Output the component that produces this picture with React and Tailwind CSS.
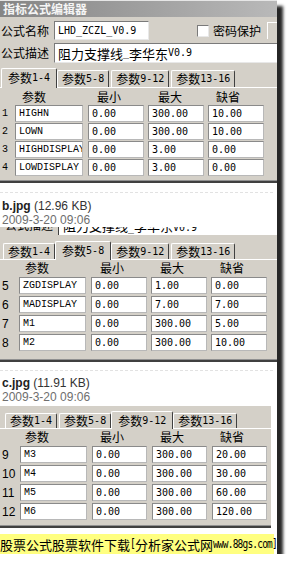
import React from "react";

const CJK_RE = /([\u3000-\u9fff\uff00-\uffef]+)/;
const cjkFont = "font-['Noto_Sans_CJK_SC',sans-serif]";
const monoFont = "font-['Liberation_Mono',monospace]";
const numFont = "font-['DejaVu_Sans_Mono',monospace]";
const sansFont = "font-['Liberation_Sans',Arial,sans-serif]";

const TABS = ["参数1-4", "参数5-8", "参数9-12", "参数13-16"];

// splits text into CJK / latin runs so latin stays half-width like SimSun
function Mixed({ text, cjk = `${cjkFont} text-[12px]`, latin = `${numFont} text-[10px]` }) {
  return text
    .split(CJK_RE)
    .filter(Boolean)
    .map((part, i) => (
      <span key={i} className={CJK_RE.test(part) ? cjk : latin}>
        {part}
      </span>
    ));
}

function TabRow({ active, className, tabH, selH }) {
  return (
    <div className={`flex items-end gap-[2px] ${className}`}>
      {TABS.map((label, i) =>
        i === active ? (
          <div
            key={label}
            className={`relative z-10 -mx-[2px] -mb-px ${selH} px-[6px] pt-[2px] flex items-start leading-[14px] bg-[#d4d0c8] border-t border-l border-white border-r border-r-[#404040] rounded-t-[2px]`}
          >
            <Mixed text={label} />
          </div>
        ) : (
          <div
            key={label}
            className={`${tabH} px-[4px] flex items-center leading-none border-t border-l border-white border-r border-r-[#404040] rounded-t-[2px]`}
          >
            <Mixed text={label} />
          </div>
        )
      )}
    </div>
  );
}

function Cell({ className, children, font }) {
  return (
    <div
      className={`${className} h-[17px] bg-white border border-[#8a8a8a] border-b-[#b8b8b8] border-r-[#b8b8b8] pl-[3px] flex items-center overflow-hidden whitespace-nowrap leading-none text-black ${font}`}
    >
      {children}
    </div>
  );
}

function ParamPanel({ rows, numCls, cols, heads, headCls, rowsCls, numFontCls }) {
  return (
    <div className="border-t border-white">
      <div className={`flex items-center ${headCls}`}>
        {["参数", "最小", "最大", "缺省"].map((h, i) => (
          <span key={h} className={`${heads[i]} ${cjkFont} text-[12px] leading-none text-black`}>
            {h}
          </span>
        ))}
      </div>
      <div className={`flex flex-col ${rowsCls}`}>
        {rows.map((r) => (
          <div key={r[0]} className="flex items-center">
            <span className={`${numCls} ${numFontCls} leading-none text-black pl-[2px]`}>{r[0]}</span>
            <Cell className={cols[0]} font={`${monoFont} text-[10px]`}>{r[1]}</Cell>
            <Cell className={cols[1]} font={`${numFont} text-[10px]`}>{r[2]}</Cell>
            <Cell className={cols[2]} font={`${numFont} text-[10px]`}>{r[3]}</Cell>
            <Cell className={cols[3]} font={`${numFont} text-[10px]`}>{r[4]}</Cell>
          </div>
        ))}
      </div>
    </div>
  );
}

function Caption({ name, size, date }) {
  return (
    <div className={`${sansFont} pl-[2px]`}>
      <div className="text-[12px] leading-[14px] text-[#333]">
        <span className="font-bold text-[#222]">{name}</span> ({size})
      </div>
      <div className="text-[12px] leading-[14px] text-[#6e6e6e]">{date}</div>
    </div>
  );
}

const sunken = "bg-white border border-t-[#7a7a7a] border-l-[#7a7a7a] border-b-[#e8e8e8] border-r-[#e8e8e8]";

export default function App() {
  return (
    <div className="w-[277px] bg-white shadow-[6px_6px_3px_rgba(0,0,0,0.85)]">
      {/* first dialog */}
      <div className="bg-[#d4d0c8] border-b-2 border-[#404040]">
        <div className="h-[17px] bg-linear-to-r from-[#858585] to-[#b9b9b9] border-t border-[#e6e6e6] flex items-center pl-[3px]">
          <span className={`${cjkFont} text-[12px] font-bold leading-none text-[#f5f5f5]`}>指标公式编辑器</span>
        </div>

        <div className="flex items-center mt-[4px] h-[19px]">
          <span className={`w-[54px] pl-[1px] ${cjkFont} text-[12px] leading-none text-black`}>公式名称</span>
          <div className={`w-[95px] h-[19px] ${sunken} pl-[3px] flex items-center leading-none`}>
            <Mixed text="LHD_ZCZL_V0.9" />
          </div>
          <div className={`ml-[48px] w-[12px] h-[12px] ${sunken}`} />
          <span className={`ml-[4px] ${cjkFont} text-[12px] leading-none text-black`}>密码保护</span>
          <div className="ml-[6px] h-[17px] flex-1 border-t border-l border-white" />
        </div>

        <div className="flex items-center mt-[3px] h-[20px]">
          <span className={`w-[54px] pl-[1px] ${cjkFont} text-[12px] leading-none text-black`}>公式描述</span>
          <div className={`flex-1 h-[20px] ${sunken} border-r-0 pl-[3px] flex items-center leading-none`}>
            <Mixed text="阻力支撑线_李华东V0.9" cjk={`${cjkFont} text-[13px]`} />
          </div>
        </div>

        <TabRow active={0} className="mt-[5px] pl-[3px]" tabH="h-[17px]" selH="h-[20px]" />
        <div className="pb-[4px] border-b border-[#909090]">
          <ParamPanel
            rows={[
              ["1", "HIGHN", "0.00", "300.00", "10.00"],
              ["2", "LOWN", "0.00", "300.00", "10.00"],
              ["3", "HIGHDISPLAY", "0.00", "3.00", "0.00"],
              ["4", "LOWDISPLAY", "0.00", "3.00", "0.00"],
            ]}
            numCls="w-[15px] text-[10px]"
            numFontCls={monoFont}
            cols={["w-[68px] mr-[5px]", "w-[56px] mr-[4px]", "w-[56px] mr-[4px]", "w-[56px]"]}
            heads={["ml-[22px] w-[75px]", "w-[61px]", "w-[58px]", ""]}
            headCls="h-[17px]"
            rowsCls="gap-[1px]"
          />
        </div>
      </div>

      <div className="mt-[9px] w-[273px] border-t border-dashed border-[#e2e2e2]" />

      {/* b.jpg */}
      <div className="mt-[6px]">
        <Caption name="b.jpg" size="12.96 KB" date="2009-3-20 09:06" />
      </div>
      {/* bottom edge of the description row left over in the crop */}
      <div className="flex h-[8px] overflow-hidden">
        <div className="w-[58px] bg-[#d4d0c8] pl-[5px]">
          <div className={`-mt-[9px] ${cjkFont} text-[12px] leading-[14px] text-black`}>公式描述</div>
        </div>
        <div className="flex-1 border-l border-[#404040] pl-[4px]">
          <div className="-mt-[9px] leading-[14px]">
            <Mixed text="阻力支撑线_李华东V0.9" cjk={`${cjkFont} text-[13px]`} />
          </div>
        </div>
      </div>
      <div className="bg-[#d4d0c8] border-b-2 border-[#404040]">
        <TabRow active={1} className="pt-[6px] pl-[3px]" tabH="h-[16px]" selH="h-[19px]" />
        <div className="pb-[8px] border-b border-[#909090]">
          <ParamPanel
            rows={[
              ["5", "ZGDISPLAY", "0.00", "1.00", "0.00"],
              ["6", "MADISPLAY", "0.00", "7.00", "7.00"],
              ["7", "M1", "0.00", "300.00", "5.00"],
              ["8", "M2", "0.00", "300.00", "10.00"],
            ]}
            numCls="w-[19px] text-[12px]"
            numFontCls={sansFont}
            cols={["w-[67px] mr-[5px]", "w-[56px] mr-[4px]", "w-[56px] mr-[4px]", "w-[56px]"]}
            heads={["ml-[25px] w-[75px]", "w-[60px]", "w-[60px]", ""]}
            headCls="h-[15px]"
            rowsCls="mt-[2px] gap-[2px]"
          />
        </div>
      </div>

      <div className="mt-[8px] w-[273px] border-t border-dashed border-[#e2e2e2]" />

      {/* c.jpg */}
      <div className="mt-[5px]">
        <Caption name="c.jpg" size="11.91 KB" date="2009-3-20 09:06" />
      </div>
      <div className="mt-[2px] w-[271px] bg-[#d4d0c8] border-b-2 border-[#404040]">
        <TabRow active={2} className="pt-[5px] pl-[5px]" tabH="h-[15px]" selH="h-[18px]" />
        <div className="pb-[5px] border-b border-[#909090]">
          <ParamPanel
            rows={[
              ["9", "M3", "0.00", "300.00", "20.00"],
              ["10", "M4", "0.00", "300.00", "30.00"],
              ["11", "M5", "0.00", "300.00", "60.00"],
              ["12", "M6", "0.00", "300.00", "120.00"],
            ]}
            numCls="w-[20px] text-[12px]"
            numFontCls={sansFont}
            cols={["w-[67px] mr-[5px]", "w-[55px] mr-[5px]", "w-[55px] mr-[5px]", "w-[55px]"]}
            heads={["ml-[25px] w-[75px]", "w-[60px]", "w-[60px]", ""]}
            headCls="h-[16px]"
            rowsCls="mt-[1px] gap-[2px]"
          />
        </div>
      </div>

      <div className="mt-[6px] h-[20px] w-[274px] bg-[#ffff80] flex items-center whitespace-nowrap leading-none text-black">
        <Mixed
          text="股票公式股票软件下载[分析家公式网www.88gs.com]"
          cjk={`${cjkFont} text-[13px]`}
          latin={`${numFont} text-[9.5px] tracking-[-0.8px] inline-block scale-y-[1.3]`}
        />
      </div>
    </div>
  );
}
